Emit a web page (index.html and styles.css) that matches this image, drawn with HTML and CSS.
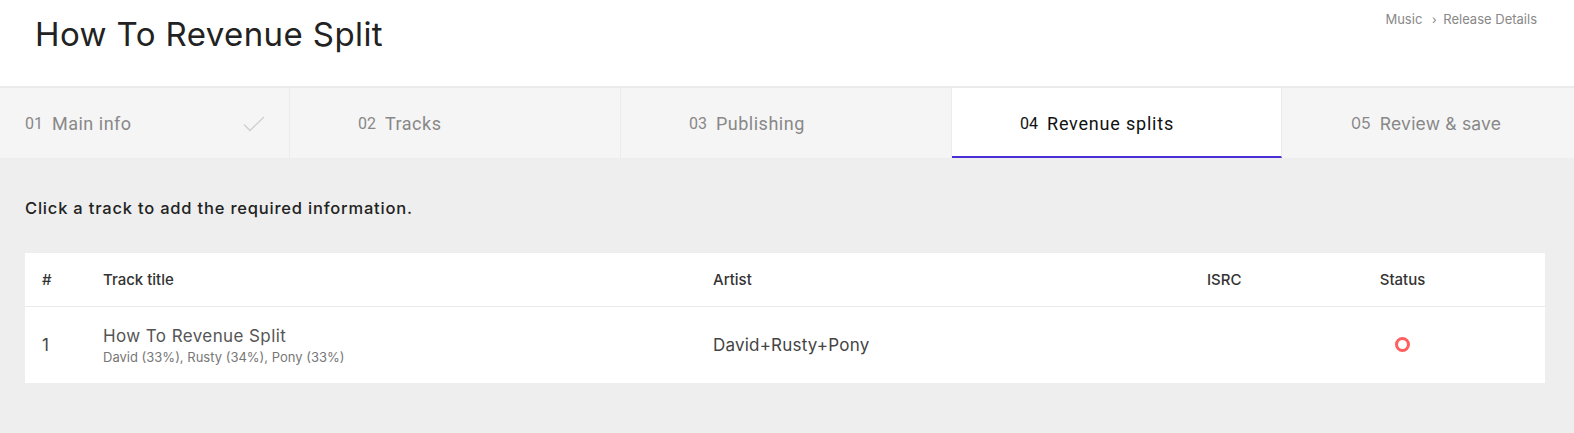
FILE: index.html
```html
<!DOCTYPE html>
<html>
<head>
	<meta charset="utf-8">
	<title>How To Revenue Split</title>
	<link rel="stylesheet" href="styles.css">
</head>
<body>
	<div class="header">
		<h1>How To Revenue Split</h1>
		<div class="crumbs">Music <span class="sep">›</span> Release Details</div>
	</div>

	<!-- Lépések -->
	<div class="steps">
		<div class="step step-first">
			<span class="num">01</span><span class="label">Main info</span>
			<svg class="check" width="22" height="16" viewBox="0 0 22 16"><path d="M1 8.5 L7 14.5 L21 1" fill="none" stroke="#cfcfcf" stroke-width="1.4"/></svg>
		</div>
		<div class="step"><span class="num">02</span><span class="label">Tracks</span></div>
		<div class="step"><span class="num">03</span><span class="label">Publishing</span></div>
		<div class="step active"><span class="num">04</span><span class="label">Revenue splits</span></div>
		<div class="step step-last"><span class="num">05</span><span class="label">Review &amp; save</span></div>
	</div>

	<div class="content">
		<p class="hint">Click a track to add the required information.</p>

		<div class="tracks">
			<div class="row head">
				<div>#</div>
				<div>Track title</div>
				<div>Artist</div>
				<div>ISRC</div>
				<div class="center">Status</div>
			</div>
			<div class="row item">
				<div class="idx">1</div>
				<div>
					<div class="title">How To Revenue Split</div>
					<div class="splits">David (33%), Rusty (34%), Pony (33%)</div>
				</div>
				<div class="artist">David+Rusty+Pony</div>
				<div></div>
				<div class="center"><span class="status"></span></div>
			</div>
		</div>
	</div>
</body>
</html>
```

FILE: styles.css
```css
body {
	margin: 0;
	padding: 0;
	font-family: Inter, "Open Sans", Arial, sans-serif;
	background-color: #eeeeee;
	color: #222;
}

.header {
	background-color: #fff;
	height: 86px;
	display: flex;
	justify-content: space-between;
	align-items: flex-start;
	padding: 0 37px 0 35px;
	border-bottom: 2px solid #ebebeb;
}

h1 {
	margin: 14px 0 0 0;
	font-size: 33px;
	font-weight: 400;
	color: #222;
	letter-spacing: 0.4px;
}

.crumbs {
	margin-top: 11px;
	font-size: 13px;
	color: #888;
}

.crumbs .sep {
	margin: 0 3px 0 6px;
	font-size: 12px;
}

.steps {
	display: flex;
	height: 70px;
	background-color: #f5f5f5;
	font-family: Roboto, Arial, sans-serif;
}

.step {
	width: 331px;
	display: flex;
	align-items: center;
	padding-left: 68px;
	box-sizing: border-box;
	border-right: 1px solid #ebebeb;
	color: #888;
}

.step-first {
	width: 290px;
	padding-left: 25px;
	position: relative;
}

.step-last {
	flex: 1;
	border-right: none;
	padding-left: 69px;
	font-family: Inter, "Open Sans", Arial, sans-serif;
}

.step .num {
	font-size: 16px;
	margin-right: 9px;
}

.step .label {
	font-size: 18px;
	letter-spacing: 0.5px;
}

.step-last .label {
	font-size: 17.5px;
	letter-spacing: 0.2px;
}

.check {
	position: absolute;
	right: 24px;
	top: 28px;
}

.step.active {
	background-color: #fff;
	color: #111;
	width: 330px;
	border-bottom: 2px solid #4b2fd6;
	padding-top: 2px;
}

.step.active .label {
	letter-spacing: 0.8px;
}

.content {
	padding: 40px 29px 0 25px;
}

.hint {
	margin: 0 0 35px 0;
	font-size: 16.5px;
	font-weight: 500;
	letter-spacing: 0.8px;
	color: #222;
}

.tracks {
	background-color: #fff;
}

.row {
	display: grid;
	grid-template-columns: 61px 610px 494px 123px 145px;
	padding-left: 17px;
	align-items: center;
}

.row.head {
	height: 53px;
	border-bottom: 1px solid #ebebeb;
	font-size: 15px;
	font-weight: 500;
	color: #333;
}

.row.item {
	height: 76px;
}

.center {
	text-align: center;
}

.idx {
	font-size: 17px;
	color: #444;
}

.title {
	font-size: 17px;
	letter-spacing: 0.4px;
	color: #555;
}

.splits {
	font-size: 13px;
	color: #777;
	margin-top: 3px;
}

.artist {
	font-size: 17px;
	letter-spacing: 0.2px;
	color: #444;
}

.status {
	display: inline-block;
	width: 9px;
	height: 9px;
	border: 3px solid #ff5f5f;
	border-radius: 50%;
	margin-top: -4px;
	vertical-align: middle;
}
```
